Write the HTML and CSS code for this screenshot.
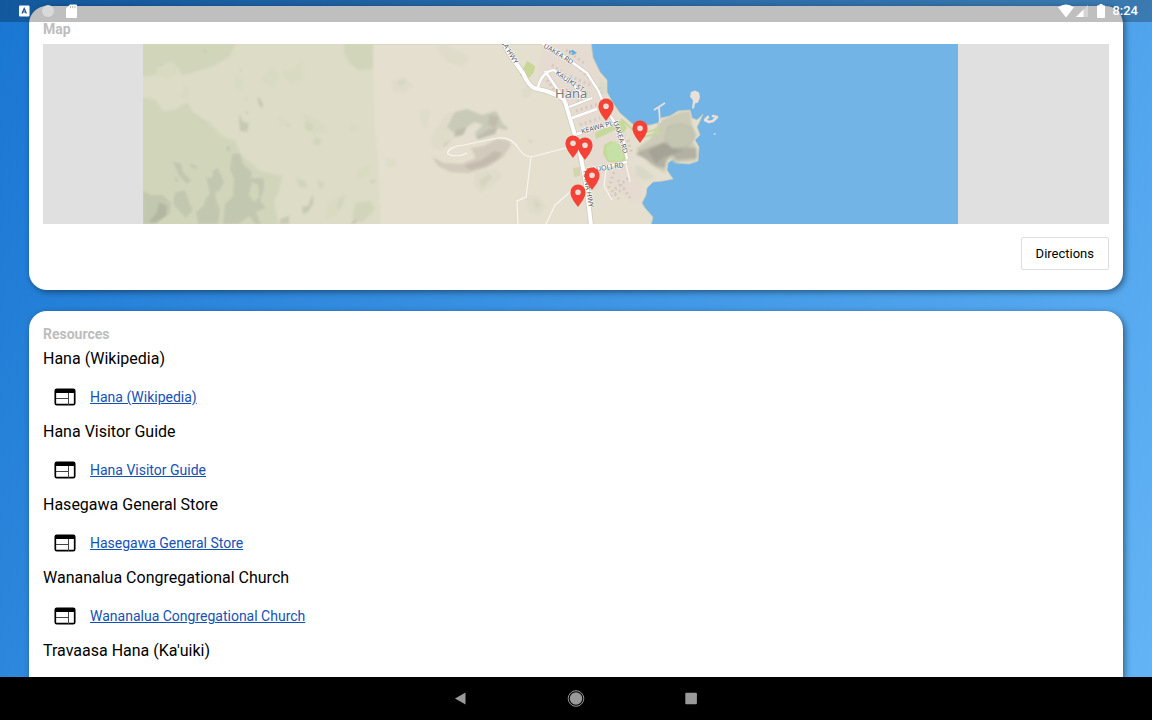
FILE: index.html
```html
<!DOCTYPE html>
<html lang="en">
<head>
<meta charset="utf-8">
<meta name="viewport" content="width=device-width, initial-scale=1">
<title>Hana</title>
<link rel="stylesheet" href="styles.css">
</head>
<body>
<div class="screen">
  <header class="status">
    <div class="status-group">
      <svg class="status-icon" width="16" height="16" viewBox="0 0 16 16" aria-hidden="true"><rect x="3" y="2.500" width="10.500" height="11" rx="1" fill="#fff"/><path d="M6 10.500 8.200 5.500l2.200 5M6.800 9h2.800" fill="none" stroke="#1b4f90" stroke-width="1.200"/></svg>
      <svg class="status-icon" width="16" height="16" viewBox="0 0 16 16" aria-hidden="true"><circle cx="8" cy="8" r="6" fill="#d9d9d9"/><path d="M12 3.500A6 6 0 0 1 4 12.500a6 6 0 1 0 8-9z" fill="#f0f0f0"/></svg>
      <svg class="status-icon" width="16" height="16" viewBox="0 0 16 16" aria-hidden="true"><path d="M6 1.500h6a1 1 0 0 1 1 1V14a1 1 0 0 1-1 1H3a1 1 0 0 1-1-1V5.500z" fill="#fff"/><path d="M6.500 3v2.200M8.700 3v2.200M10.900 3v2.200" stroke="#b5b5b5" stroke-width="1"/></svg>
    </div>
    <div class="status-group status-right">
      <svg width="16" height="14" viewBox="0 0 16 14" aria-hidden="true"><path d="M0 3.200Q8-2.400 16 3.200L8 13.500z" fill="#fff"/></svg>
      <svg width="12" height="14" viewBox="0 0 12 14" aria-hidden="true"><path d="M12 1v12H0z" fill="#d4d4d4"/><path d="M7.500 5.500V13H0z" fill="#fff"/></svg>
      <svg class="battery" width="8" height="14" viewBox="0 0 8 14" aria-hidden="true"><path d="M2.500 0h3v1.300H7a1 1 0 0 1 1 1V13a1 1 0 0 1-1 1H1a1 1 0 0 1-1-1V2.300a1 1 0 0 1 1-1h1.500z" fill="#fff"/></svg>
      <time class="clock">8:24</time>
    </div>
  </header>

  <main class="content">
    <section class="card">
      <h2 class="label">Map</h2>
      <svg class="map" viewBox="43 44 1066 180" preserveAspectRatio="xMidYMid slice" role="img" aria-label="Map of Hana">
        <defs>
          <clipPath id="tiles"><rect x="143" y="44" width="815" height="180"/></clipPath>
          <g id="pin"><path d="M0 0C-2-2.800-7.600-9.300-7.600-14.800a7.600 7.600 0 0 1 15.200 0C7.600-9.300 2-2.800 0 0z" fill="#f44336"/><circle cx="0" cy="-14.800" r="2.800" fill="#e9dfd8"/></g>
          <filter id="soft"><feGaussianBlur stdDeviation="0.900"/></filter>
        </defs>
        <g clip-path="url(#tiles)">
          <rect x="143" y="44" width="815" height="180" fill="#73b4e6"/>
          <path id="land" fill="#e4dfcf" stroke="#c9cdb9" stroke-width=".8" d="M143 44H591L593 58 600 72 607 80 607 92 613 103 620 113 628 120 635 126 650 125 658 123 661 118 670 116 678 111 690 110 692 118 697 120 703 114 700 121 697 127 700 135 695 140 699 147 698 161 689 164 677 163 673 159 668 163 667 170 673 179 663 181 653 182 647 188 646 195 642 203 645 208 653 217 651 225H143z"/>

          <g filter="url(#soft)">
            <path fill="#dddcc6" d="M135 36H373L374 120 378 165 381 234H135z"/>
            <path fill="#d1d6bb" d="M135 36H240L230 56 213 66 195 72 182 75 176 66 170 62 160 68 155 75 135 77zM135 97 155 99 163 111 175 110 187 102 193 112 210 123 222 136 235 141 240 154 260 171 282 176 279 190 274 201 280 234H135zM344 36H373V69L358 70 350 63 344 53z"/>
            <path fill="#d9dac2" d="M157 66l7 3 9-7 8 9-14 8-10-4zM184 86l6 3-2 10-7-2zM235 75l9 5-3 10-6-5zM261 79l12-13 6 10-6 12zM282 71l12-2 9-10v20l-12 6zM278 115l10 8-7 2zM300 112l20 10 8 9-14 4zM350 122l8 6-7 5zM358 170l14-6-4 11-12 6zM328 204l16-10-6 20-12 6z"/>
            <path fill="#d1d6bb" d="M305 121l9 4-2 7-7-3zM315 137l7 3-3 6-7-3zM296 178l8 2 4 7-8 1zM317 180l8 3-5 7zM356 203l14-2 5 8-14 14-9-6zM338 200l7-5-3 12-5 4z"/>
            <path fill="#c2c7af" d="M232 154l8-1 3 11 9 8-1 6h13v12l-4 10 6 8-10 4 5 12h-6l-6-8-10 8h-16l2-20 8-8 1-18-4-8zM206 177l6 1 1-8 5-2 6 14-4 8-5 3 2 10 3 6-2 15h-20l-2-12 7-6 3-8 4-4zM173 162l8 1 2 9 8 8-4 4-8-8zM190 163l8 4-2 2-5-2zM174 176l5 4-3 3zM143 191l8 4 12 0 8 8-1 11-10 6-5 4h-12zM175 192l10-2 4 12 4 8-7 8-6-6-7-8z"/>
            <path fill="#c6c9b3" d="M202 48l5 3-1 3zM240 68l2 2-1 2zM258 96l5 8-1 5-4-6zM245 97l2 2-1 2zM239 114l4 8 6 1-2 9-7-1zM246 111l3 2-3 1zM227 146l4 1-2 5-3-2zM313 194l-5 12-6 1 1 7 5-2 5-8zM280 219l9-3v8h-9zM352 222l4-4 1 4-6 3zM370 181l7-1-5 3zM287 124l3 1-2 2z"/>
            <path fill="#d1d6bb" d="M252 182l6 3 1 12-5 5-5-7z"/>
            <path fill="#b2b7a1" d="M159 202l8 4-1 10-10 7-7-1 8-10z"/>
            <path fill="#dfdcca" d="M392 81l12-4 9 8-8 8-12-1zM436 48l10-3 24 12-8 10-15-6zM420 109l10 2-3 18-6-4zM431 136l15-22 12-2-6 30-12 8-8-3zM475 172l20-3 7 8-12 10-10 6-6-9zM526 196l12 0 8 10-8 10-10-6zM385 158l12 2-3 8-8-2zM521 90l8-5 3 10-9 3z"/>
            <path fill="#d6d6c0" d="M397 83l6-3 3 2-6 4zM479 180l10-6 3 3-10 12zM533 199l8 6-4 5z"/>
            <path fill="#c9cab7" d="M455 112l12-3 15 6 14-4 7 13 5 4-2 2-11-3-8 8-10 4-2-6 8-8-8-3-8 5-13 6-7-6z"/>
            <path fill="#c0bcae" d="M456 130l11-3-4 8-9 2zM476 138l12-8 10-3-3 7-16 5zM490 115l9 2-4 11-7-4z"/>
            <path fill="#d2cabd" d="M432 157l12 6 18 1 14-6-5-10 13-2 13-7 12 2 2 4-8 12-15 10-19 6-19-1-12-6zM443 145l6-5-2 5-4 2zM528 141l4-1-1 3z"/>
            <path fill="#c2bbae" d="M464 166l18-6 12-9 8 2-4 6-13 7-15 4z"/>
            <path fill="#e5dbd0" d="M544 36h46l2 22 7 16 6 8v12l10 17 10 17 3 35 13 18 1 18-12 3-12-11-8-8-16 6-7-22-7-40-15-29-16-8-10-14z"/>
            <path fill="#cbcbb8" d="M660 121l20-9 10-1 2 14 5 10-4 7 4 7-1 12-21 2-5-5-4 6-1 9-14-8-15-16 14-10z"/>
            <path fill="#b3b1a3" d="M638 152l15-6 12-4 14 5 17 1 1 10-20 2-5-5-6 5-1 8-9-2-10-7-10-5z"/>
            <path fill="#a5a395" d="M648 151l16-8 10 6 10 2-20 6-8 6z"/>
            <path fill="#c4c6b2" stroke="#b8b9a6" d="M668 127l12-3 11 3 3 11-7 9-15 1-7-8z"/>
            <path fill="#d8d9c8" d="M600 78l6 7 0 10-5-2zM635 165l10 4 10 9-10 2-9-5z"/>
          </g>

          <path fill="#c8d795" d="M520 75l7-14 8 5-1 6-4 5-5 2z"/>
          <path fill="#c5d998" d="M595 133l18-9 9-4 5 8-4 5-8-3-19 9zM604 145l7-4 9 4 6 13-3 5-15-1-5-8z"/>
          <path fill="#d3d5ae" d="M573 168l7-1v9l-6 1z"/>
          <path fill="none" stroke="#c5d998" stroke-width="2" d="M621 119l11 10q14 6 26-1v5l-14 4"/>
          <path fill="#c5e1a5" d="M606 146l10-5 8 16-3 4-13-1z"/>
          <path fill="#63aee2" d="M569 51l4-1 4 3-4 2-4-1z"/>

          <g fill="none" stroke="#d6c9be" stroke-width="3" stroke-dasharray="2 3">
            <path d="M547 80l12 17M552 65l13 10M566 50l18 13M577 66l16 16M570 76l20 9M566 90l22 4M576 111l22-7M580 125l20-7M602 99l-3-15M577 102l12-3M611 118l10 20M614 172l-5 15 10 12M628 178l-14 12M625 188l-14 8M618 180l12 18M628 140l4 14"/>
          </g>

          <g fill="none" stroke="#f8f6f0" stroke-width="1.200">
            <path d="M467 153c-7 4-16 3-19 1-2-4 6-8 16-9l34-7c12-1 17 5 21 11 3 5 6 7 12 8l47-12M531 157l-5 40-9 4 1 23M546 224l9-19 22-19M606 170l-2 16 8 14M626 164l4 18"/>
          </g>
          <g fill="none" stroke="#cfc8c0" stroke-width="3.400">
            <path d="M538 88c1-8 7-17 16-18l20 15 10 14M545 71l19 28M569 107l23-9M572 118l25-9M540 42l25 15 22 16 11 17 8 19 11 17 7 16 3 17M577 134l34-9 7-4M585 171l42-9"/>
            <path stroke-width="5.500" d="M500 36l10 19 13 18q5 12 11 15l12 3c14 5 19 7 20 14l6 20 8 28 6 30 5 42"/>
          </g>
          <g fill="none" stroke="#fff" stroke-width="2.400">
            <path d="M538 88c1-8 7-17 16-18l20 15 10 14M545 71l19 28M569 107l23-9M572 118l25-9M540 42l25 15 22 16 11 17 8 19 11 17 7 16 3 17M577 134l34-9 7-4M585 171l42-9"/>
            <path stroke-width="4" d="M500 36l10 19 13 18q5 12 11 15l12 3c14 5 19 7 20 14l6 20 8 28 6 30 5 42"/>
          </g>
          <path d="M654 110l11-7M659 107l1 16" fill="none" stroke="#e9e0d8" stroke-width="1.800"/>
          <path fill="#e9e0d8" d="M691 92l4-1.500 4 2 1 5-2 5-3 1-1 5h-2l1-8-3-4zM713 134l3-1-1 2z"/>
          <path fill="none" stroke="#e9e0d8" stroke-width="2.600" stroke-linejoin="round" stroke-linecap="round" d="M708 117l-3 3 4 2 4-1 4-4-4-1"/>

          <g class="map-text">
            <text class="road" transform="translate(495 33) rotate(58)">HANA HWY</text>
            <text class="road" transform="translate(543 47) rotate(32)">UAKEA RD</text>
            <text class="road" transform="translate(555 74) rotate(34)">KAUIKI ST</text>
            <text class="road" transform="translate(582 134) rotate(-16)">KEAWA PL</text>
            <text class="road" transform="translate(613 122) rotate(72)">UAKEA RD</text>
            <text class="road" transform="translate(587 173) rotate(-9)">HAUOLI RD</text>
            <text class="road" transform="translate(583 171) rotate(81)">HANA HWY</text>
            <text class="town" x="555" y="98">Hana</text>
          </g>
        </g>
        <use href="#pin" x="606" y="121"/>
        <use href="#pin" x="640" y="143"/>
        <use href="#pin" x="573" y="158"/>
        <use href="#pin" x="585" y="160"/>
        <use href="#pin" x="592" y="190"/>
        <use href="#pin" x="578" y="207"/>
      </svg>
      <div class="actions"><button class="button" type="button">Directions</button></div>
    </section>

    <section class="card card-last">
      <h2 class="label">Resources</h2>
      <h3 class="title">Hana (Wikipedia)</h3>
      <p class="resource"><svg class="web" viewBox="0 0 22 18" aria-hidden="true"><rect x="1.300" y="1.300" width="19.400" height="15.400" rx="1.500" fill="#fff" stroke="#000" stroke-width="1.700"/><path d="M1.300 1.300h19.400v3.700H1.300z"/><path d="M2 10.500h12M14.500 5v12" stroke="#444" fill="none"/></svg><a href="#">Hana (Wikipedia)</a></p>
      <h3 class="title">Hana Visitor Guide</h3>
      <p class="resource"><svg class="web" viewBox="0 0 22 18" aria-hidden="true"><rect x="1.300" y="1.300" width="19.400" height="15.400" rx="1.500" fill="#fff" stroke="#000" stroke-width="1.700"/><path d="M1.300 1.300h19.400v3.700H1.300z"/><path d="M2 10.500h12M14.500 5v12" stroke="#444" fill="none"/></svg><a href="#">Hana Visitor Guide</a></p>
      <h3 class="title">Hasegawa General Store</h3>
      <p class="resource"><svg class="web" viewBox="0 0 22 18" aria-hidden="true"><rect x="1.300" y="1.300" width="19.400" height="15.400" rx="1.500" fill="#fff" stroke="#000" stroke-width="1.700"/><path d="M1.300 1.300h19.400v3.700H1.300z"/><path d="M2 10.500h12M14.500 5v12" stroke="#444" fill="none"/></svg><a href="#">Hasegawa General Store</a></p>
      <h3 class="title">Wananalua Congregational Church</h3>
      <p class="resource"><svg class="web" viewBox="0 0 22 18" aria-hidden="true"><rect x="1.300" y="1.300" width="19.400" height="15.400" rx="1.500" fill="#fff" stroke="#000" stroke-width="1.700"/><path d="M1.300 1.300h19.400v3.700H1.300z"/><path d="M2 10.500h12M14.500 5v12" stroke="#444" fill="none"/></svg><a href="#">Wananalua Congregational Church</a></p>
      <h3 class="title">Travaasa Hana (Ka'uiki)</h3>
    </section>
  </main>

  <nav class="navbar">
    <button class="nav-button" type="button" aria-label="Back"><svg width="18" height="18" viewBox="0 0 18 18"><path d="M3 8.500 13.500 2.500v12z" fill="#999"/></svg></button>
    <button class="nav-button" type="button" aria-label="Home"><svg width="18" height="18" viewBox="0 0 18 18"><circle cx="9" cy="8.500" r="7.800" fill="none" stroke="#999"/><circle cx="9" cy="8.500" r="6.200" fill="#999"/></svg></button>
    <button class="nav-button" type="button" aria-label="Recent apps"><svg width="18" height="18" viewBox="0 0 18 18"><rect x="3.300" y="2.700" width="11.600" height="11.600" rx="1" fill="#999"/></svg></button>
  </nav>
</div>
</body>
</html>
```
FILE: styles.css
```css
* {
  box-sizing: border-box;
}

body {
  margin: 0;
  font-family: Roboto, sans-serif;
  color: #000;
}

.screen {
  position: relative;
  display: flex;
  flex-direction: column;
  height: 100vh;
  background: linear-gradient(122deg, #1976d2, #64b5f6);
}

.status {
  position: absolute;
  top: 0;
  left: 0;
  right: 0;
  z-index: 1;
  display: flex;
  justify-content: space-between;
  align-items: center;
  height: 22px;
  padding: 0 14px 0 16px;
  background: rgba(0, 0, 0, 0.25);
}

.status-group {
  display: flex;
  align-items: center;
  gap: 8px;
}

.status-icon {
  display: block;
}

.status-right {
  gap: 2px;
}

.battery {
  margin: 0 5px 0 7px;
}

.clock {
  font-size: 13px;
  font-weight: 500;
  line-height: 22px;
  color: #fff;
}

.content {
  flex: 1;
  min-height: 0;
  display: flex;
  flex-direction: column;
  gap: 21px;
  padding: 6px 29px 0;
  overflow: hidden;
}

.card {
  flex: none;
  padding: 14px 14px 20px;
  border-radius: 18px;
  background: #fff;
  box-shadow: 2px 2px 6px rgba(0, 0, 0, 0.45);
}

.card-last {
  flex: 1 0 auto;
  padding-bottom: 0;
  border-radius: 18px 18px 0 0;
}

.label {
  margin: 0;
  font-size: 14px;
  font-weight: 700;
  line-height: 18px;
  color: #bdbdbd;
}

.map {
  display: block;
  width: 100%;
  height: 180px;
  margin: 6px 0 13px;
  background: #e0e0e0;
}

.map-text {
  font-family: "Noto Sans", sans-serif;
  fill: #555;
  stroke: #fff;
  stroke-width: 1px;
  paint-order: stroke;
}

.road {
  font-size: 7px;
}

.town {
  font-size: 13px;
  fill: #777;
}

.actions {
  display: flex;
  justify-content: flex-end;
}

.button {
  padding: 0 14px;
  border: 1px solid #dedede;
  border-radius: 2px;
  background: #fff;
  font-family: inherit;
  font-size: 13px;
  font-weight: 400;
  line-height: 31px;
  color: #000;
}

.title {
  margin: 0;
  font-size: 16px;
  font-weight: 400;
  line-height: 32px;
}

.resource {
  display: flex;
  align-items: center;
  gap: 14px;
  height: 41px;
  margin: 0;
  padding: 3px 11px 0;
  font-size: 14px;
}

.resource a {
  color: #1550b5;
}

.web {
  width: 22px;
  height: 18px;
}

.navbar {
  flex: none;
  display: flex;
  justify-content: center;
  align-items: center;
  gap: 97px;
  height: 43px;
  background: #000;
}

.nav-button {
  padding: 0;
  border: 0;
  background: none;
}

.nav-button svg {
  display: block;
}
```
